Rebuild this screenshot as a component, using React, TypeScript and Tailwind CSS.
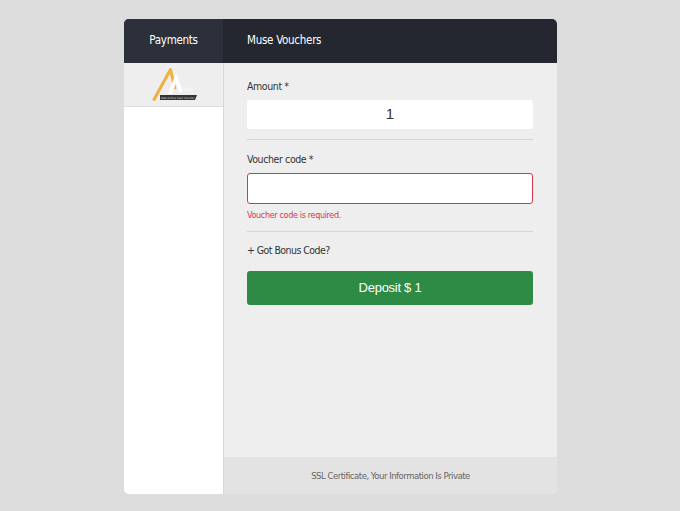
export default function App() {
  return (
    <div className="min-h-[511px] bg-[#dddddd] pt-[19px] pl-[124px] font-['DejaVu_Sans_Condensed','DejaVu_Sans',sans-serif]">
      <div className="w-[433px] h-[475px] rounded-[5px] overflow-hidden flex flex-col bg-[#eeeeee]">
        <div className="h-[44px] flex bg-[#24272f] text-white text-[11.5px] tracking-[-0.28px]">
          <div className="w-[99px] bg-[#2c303a] flex items-center justify-center">Payments</div>
          <div className="pl-[24px] flex items-center">Muse Vouchers</div>
        </div>
        <div className="flex-1 flex min-h-0">
          <div className="w-[100px] bg-white border-r border-[#d8d8d8] flex flex-col">
            <div className="h-[44px] bg-[#eeeeee] border-b border-[#dddddd] flex items-center justify-center">
              <svg width="50" height="37" viewBox="0 0 50 37">
                <path d="M4.5 34.5 L21.5 3.5 L26 23" fill="none" stroke="#eeb13c" strokeWidth="3" strokeLinejoin="round" />
                <path d="M19 28 L27 7 L34 26 L30 26 L27 17 L23 28 Z" fill="#ffffff" />
                <text x="34" y="25" fontSize="7" fill="#f8f8f8">use</text>
                <path d="M11 29 H48 L46 34 H11 Z" fill="#333333" />
                <text x="12" y="32.6" fontSize="2.9" fill="#dddddd">Web Online Cash Voucher</text>
              </svg>
            </div>
          </div>
          <div className="flex-1 flex flex-col">
            <div className="flex-1 pl-[23px] pr-[24px] pt-[16px]">
              <div className="text-[10.5px] tracking-[-0.4px] leading-[15px] text-[#333333]">Amount *</div>
              <div className="mt-[6px] h-[29px] bg-white rounded-[2px] flex items-center justify-center font-['Liberation_Sans',sans-serif] text-[15px] text-[#333333]">1</div>
              <div className="mt-[10px] border-t border-[#d5d5d5]" />
              <div className="mt-[12px] text-[10.5px] tracking-[-0.4px] leading-[15px] text-[#333333]">Voucher code *</div>
              <div className="mt-[6px] h-[31px] bg-white rounded-[3px] border border-[#dc3545]" />
              <div className="mt-[5px] text-[9px] tracking-[-0.36px] leading-[13px] text-[#dc3545]">Voucher code is required.</div>
              <div className="mt-[9px] border-t border-[#d5d5d5]" />
              <div className="mt-[11px] text-[10.5px] tracking-[-0.55px] leading-[15px] text-[#333333]">+ Got Bonus Code?</div>
              <div className="mt-[13px] h-[34px] bg-[#2e8b45] rounded-[3px] flex items-center justify-center font-['Liberation_Sans',sans-serif] text-[13px] tracking-[-0.27px] text-white">Deposit $ 1</div>
            </div>
            <div className="h-[37px] bg-[#e3e3e3] flex items-center justify-center pt-[1px] text-[9.5px] tracking-[-0.5px] text-[#666666]">SSL Certificate, Your Information Is Private</div>
          </div>
        </div>
      </div>
    </div>
  );
}
